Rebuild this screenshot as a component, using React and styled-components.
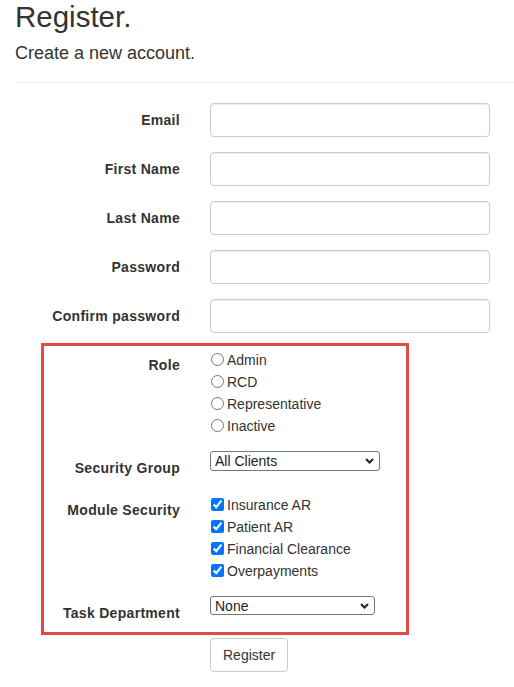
import React from "react";
import styled, { createGlobalStyle } from "styled-components";

const Global = createGlobalStyle`
  html, body { margin: 0; padding: 0; background: #fff; }
  body {
    font-family: "Liberation Sans", Arial, Helvetica, sans-serif;
    font-size: 14px;
    line-height: 20px;
    color: #333;
  }
  * { box-sizing: border-box; }
`;

const Page = styled.div`
  padding-left: 15px;
`;

const Title = styled.h2`
  margin: 0 0 10px;
  font-size: 29.5px;
  line-height: 33px;
  font-weight: normal;
  color: #333;
`;

const Subtitle = styled.h4`
  margin: 0;
  font-size: 18px;
  line-height: 20px;
  font-weight: normal;
  color: #333;
`;

const Rule = styled.hr`
  margin: 19px 0 20px;
  border: 0;
  border-top: 1px solid #eee;
`;

const Row = styled.div`
  display: grid;
  grid-template-columns: 165px 1fr;
  column-gap: 30px;
  align-items: start;
  margin-bottom: 15px;
`;

const Label = styled.label`
  height: 27px;
  text-align: right;
  font-weight: bold;
  font-size: 14px;
  letter-spacing: 0.3px;
  line-height: 19px;
  padding-top: 8px;
  color: #333;
  white-space: nowrap;
`;

const TextInput = styled.input`
  width: 280px;
  height: 34px;
  padding: 6px 12px;
  font: inherit;
  color: #555;
  background: #fff;
  border: 1px solid #ccc;
  border-radius: 4px;
  box-shadow: inset 0 1px 1px rgba(0, 0, 0, 0.075);
`;

const Section = styled.div`
  position: relative;
`;

const Highlight = styled.div`
  position: absolute;
  top: -5px;
  left: 26px;
  width: 368px;
  height: 292px;
  border: 3px solid #e24a4a;
  pointer-events: none;
`;

const OptionList = styled.div`
  display: flex;
  flex-direction: column;
`;

const Option = styled.label`
  display: flex;
  align-items: center;
  height: 22px;
  padding-top: 1px;
  font-size: 14px;
  color: #333;
  white-space: nowrap;
`;

const Choice = styled.input`
  width: 13px;
  height: 13px;
  margin: 0 3px 0 1px;
  accent-color: #0075ff;
`;

const SelectWrap = styled.div`
  position: relative;
  width: ${(p) => p.$width}px;
  height: ${(p) => p.$height}px;
`;

const Select = styled.select`
  appearance: none;
  -webkit-appearance: none;
  display: block;
  width: 100%;
  height: 100%;
  padding: 0 20px 0 4px;
  font-family: "Liberation Sans", Arial, sans-serif;
  font-size: 14px;
  line-height: 18px;
  color: #222;
  background: #fff;
  border: 1px solid #767676;
  border-radius: 3px;
`;

const Chevron = styled.svg`
  position: absolute;
  right: 6px;
  top: 50%;
  margin-top: -3px;
  width: 9px;
  height: 6px;
  pointer-events: none;
`;

const Button = styled.button`
  justify-self: start;
  height: 34px;
  padding: 6px 12px;
  font-family: "Liberation Sans", Arial, sans-serif;
  font-size: 14px;
  line-height: 20px;
  color: #333;
  background: #fff;
  border: 1px solid #ccc;
  border-radius: 4px;
`;

const fields = ["Email", "First Name", "Last Name", "Password", "Confirm password"];
const roles = ["Admin", "RCD", "Representative", "Inactive"];
const modules = ["Insurance AR", "Patient AR", "Financial Clearance", "Overpayments"];

function Dropdown({ width, height, value }) {
  return (
    <SelectWrap $width={width} $height={height}>
      <Select defaultValue={value}>
        <option>{value}</option>
      </Select>
      <Chevron viewBox="0 0 9 6">
        <path d="M1 1 L4.5 4.5 L8 1" fill="none" stroke="#222" strokeWidth="2" />
      </Chevron>
    </SelectWrap>
  );
}

export default function App() {
  return (
    <>
      <Global />
      <Page>
        <Title>Register.</Title>
        <Subtitle>Create a new account.</Subtitle>
        <Rule />
        {fields.map((f) => (
          <Row key={f}>
            <Label>{f}</Label>
            <TextInput type={f.toLowerCase().includes("password") ? "password" : "text"} />
          </Row>
        ))}
        <Section>
          <Highlight />
          <Row>
            <Label>Role</Label>
            <OptionList>
              {roles.map((r) => (
                <Option key={r}>
                  <Choice type="radio" name="role" />
                  {r}
                </Option>
              ))}
            </OptionList>
          </Row>
          <Row>
            <Label>Security Group</Label>
            <Dropdown width={170} height={20} value="All Clients" />
          </Row>
          <Row>
            <Label>Module Security</Label>
            <OptionList>
              {modules.map((m) => (
                <Option key={m}>
                  <Choice type="checkbox" defaultChecked />
                  {m}
                </Option>
              ))}
            </OptionList>
          </Row>
          <Row>
            <Label>Task Department</Label>
            <Dropdown width={165} height={19} value="None" />
          </Row>
        </Section>
        <Row>
          <span />
          <Button type="button">Register</Button>
        </Row>
      </Page>
    </>
  );
}
